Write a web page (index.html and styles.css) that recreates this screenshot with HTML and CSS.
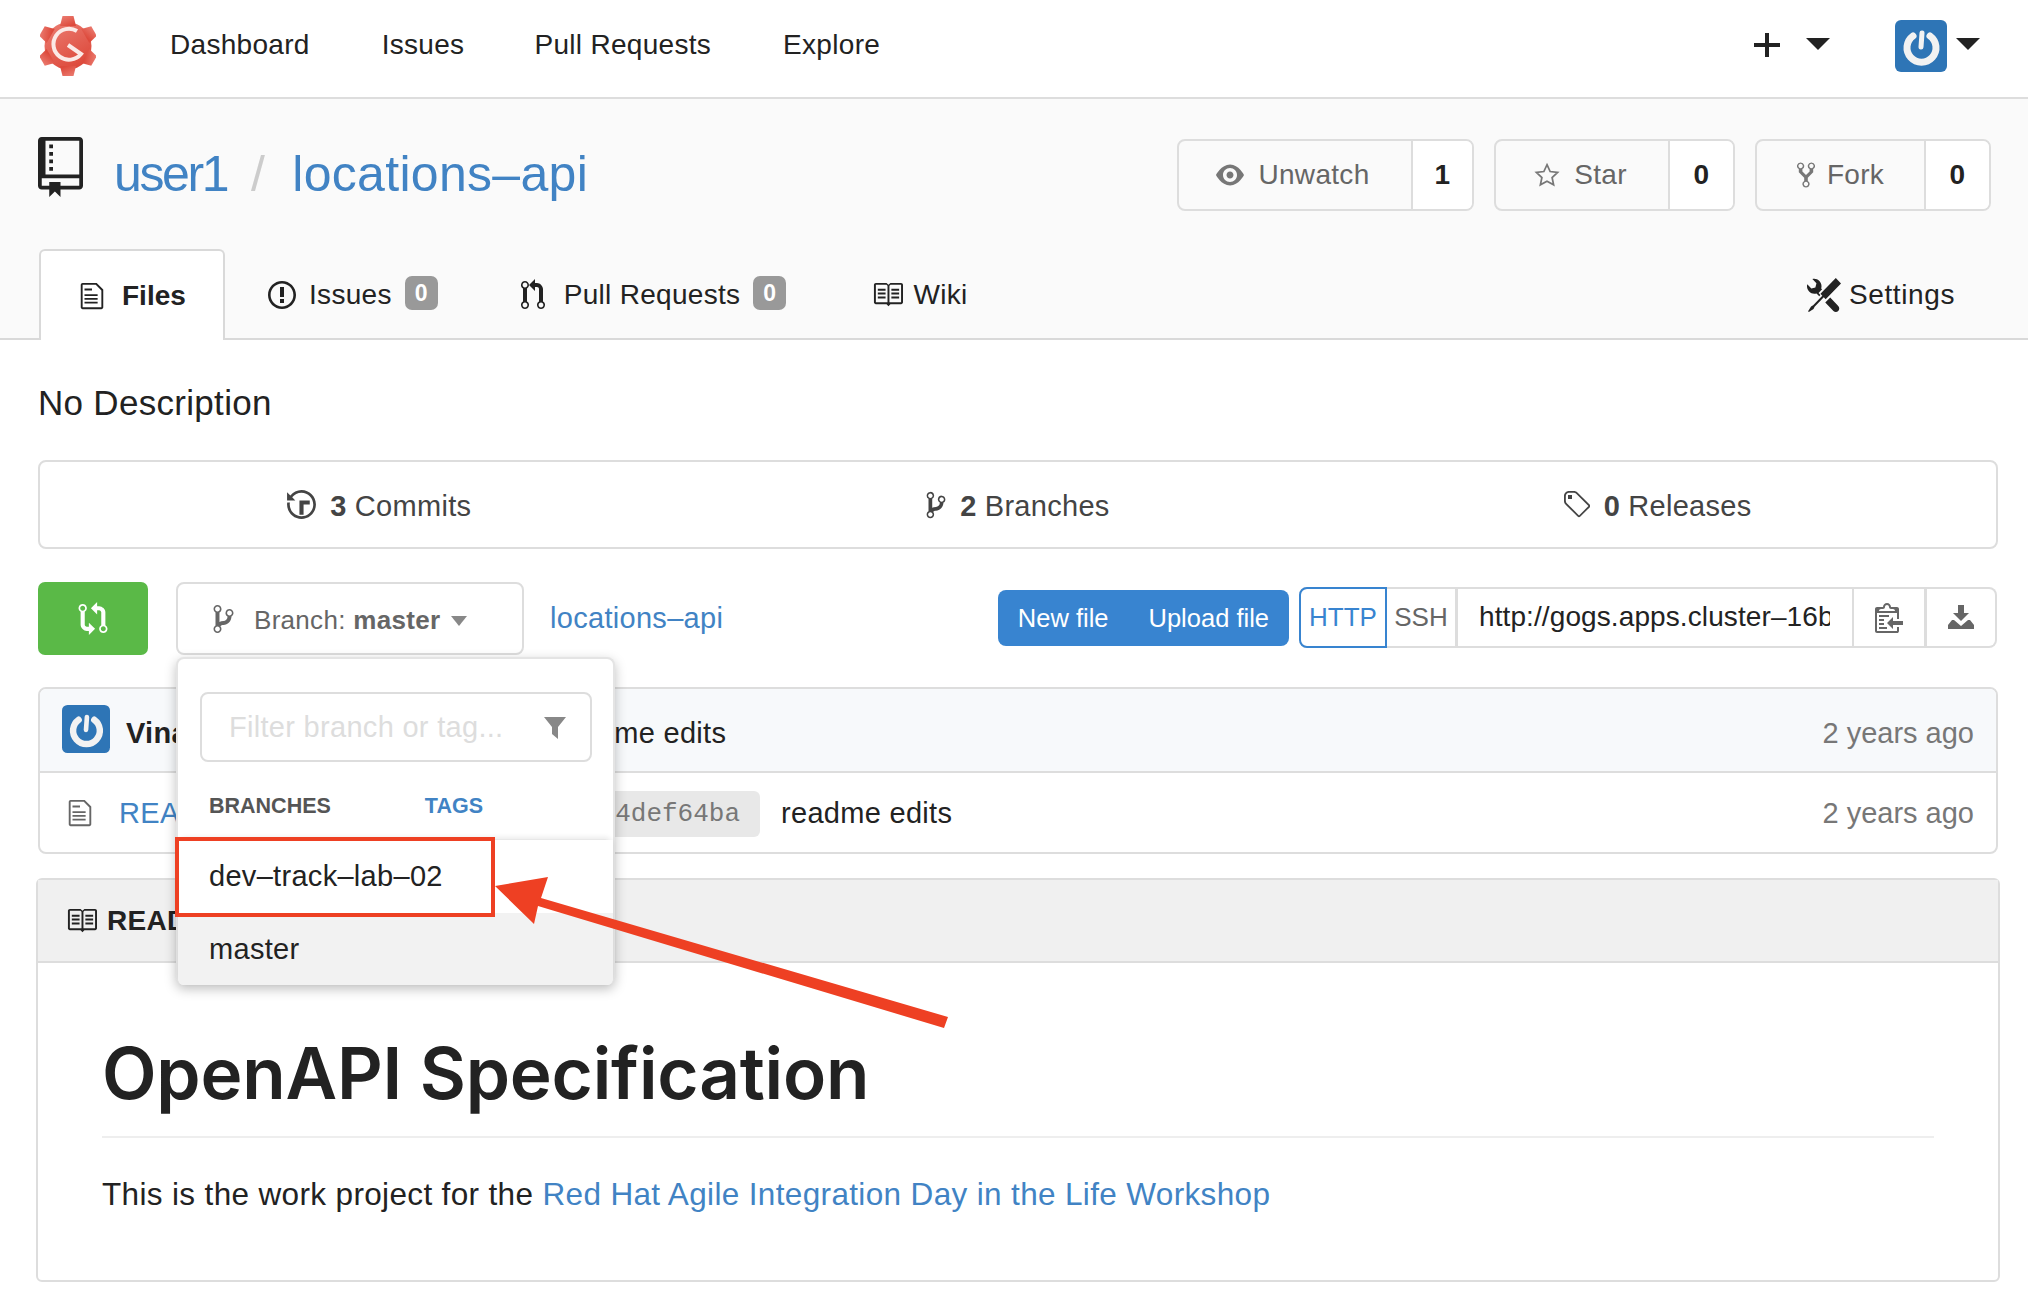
FILE: index.html
```html
<!DOCTYPE html>
<html lang="en">
<head>
	<meta charset="UTF-8">
	<title>user1/locations-api</title>
	<link rel="stylesheet" href="styles.css">
</head>
<body>
<svg class="sprite" width="0" height="0">
	<defs>
		<linearGradient id="gearFill" x1="0" y1="0" x2="0.6" y2="1">
			<stop offset="0" stop-color="#ec7f74"/>
			<stop offset="1" stop-color="#dd4a3c"/>
		</linearGradient>
		<symbol id="i-avatar" viewBox="0 0 52 52">
			<rect width="52" height="52" rx="6" fill="#2e75b6"/>
			<path d="M18 16A14.500 14.500 0 1 0 35 16" fill="none" stroke="#f2f2f2" stroke-width="7" stroke-linecap="round"/>
			<path d="M27 13L26 27" fill="none" stroke="#f2f2f2" stroke-width="5" stroke-linecap="round"/>
		</symbol>
		<symbol id="i-branch" viewBox="0 0 10 16"><path d="M10 5c0-1.110-.89-2-2-2a1.993 1.993 0 0 0-1 3.720v.3c-.02.52-.23.98-.63 1.380-.4.4-.86.61-1.380.63-.83.02-1.480.16-2 .45V4.720a1.993 1.993 0 0 0-1-3.720C.88 1 0 1.890 0 3a2 2 0 0 0 1 1.720v6.560c-.59.35-1 .99-1 1.720 0 1.110.89 2 2 2 1.110 0 2-.89 2-2 0-.53-.2-1-.53-1.360.09-.06.48-.41.59-.47.25-.11.56-.17.94-.17 1.050-.05 1.950-.45 2.750-1.250S8.950 7.770 9 6.730h-.02C9.590 6.370 10 5.730 10 5zM2 1.800c.66 0 1.200.55 1.200 1.200 0 .65-.55 1.200-1.200 1.200C1.350 4.200.8 3.650.8 3c0-.65.55-1.200 1.200-1.200zm0 12.410c-.66 0-1.200-.55-1.200-1.200 0-.65.55-1.200 1.200-1.200.65 0 1.200.55 1.200 1.200 0 .65-.55 1.200-1.200 1.200zm6-8c-.66 0-1.200-.55-1.200-1.200 0-.65.55-1.200 1.200-1.200.65 0 1.200.55 1.200 1.200 0 .65-.55 1.200-1.200 1.200z"/></symbol>
		<symbol id="i-file" viewBox="0 0 12 16"><path d="M6 5H2V4h4v1zM2 8h7V7H2v1zm0 2h7V9H2v1zm0 2h7v-1H2v1zm10-7.500V14c0 .55-.45 1-1 1H1c-.55 0-1-.45-1-1V2c0-.55.45-1 1-1h7.500L12 4.500zM11 5L8 2H1v12h10V5z"/></symbol>
		<symbol id="i-book" viewBox="0 0 16 16"><path d="M3 5h4v1H3V5zm0 3h4V7H3v1zm0 2h4V9H3v1zm11-5h-4v1h4V5zm0 2h-4v1h4V7zm0 2h-4v1h4V9zm2-6v9c0 .55-.45 1-1 1H9.500l-1 1-1-1H2c-.55 0-1-.45-1-1V3c0-.55.45-1 1-1h5.500l1 1 1-1H15c.55 0 1 .45 1 1zm-8 .5L7.500 3H2v9h6V3.500zm7-.5H9.500l-.5.5V12h6V3z"/></symbol>
	</defs>
</svg>

<header class="navbar">
	<svg class="logo" viewBox="0 0 56 60">
		<g transform="translate(28 30)" fill="url(#gearFill)">
			<circle r="23.500"/>
			<path d="M-8 -20L-5.500 -30H5.500L8 -20Z"/>
			<path d="M-8 -20L-5.500 -30H5.500L8 -20Z" transform="rotate(60)"/>
			<path d="M-8 -20L-5.500 -30H5.500L8 -20Z" transform="rotate(120)"/>
			<path d="M-8 -20L-5.500 -30H5.500L8 -20Z" transform="rotate(180)"/>
			<path d="M-8 -20L-5.500 -30H5.500L8 -20Z" transform="rotate(240)"/>
			<path d="M-8 -20L-5.500 -30H5.500L8 -20Z" transform="rotate(300)"/>
		</g>
		<path d="M37 15A15.500 15.500 0 1 0 41 38L28 29" fill="none" stroke="#fbe9e6" stroke-width="4"/>
	</svg>
	<nav class="nav-links">
		<a href="#">Dashboard</a>
		<a href="#">Issues</a>
		<a href="#">Pull Requests</a>
		<a href="#">Explore</a>
	</nav>
	<div class="nav-right">
		<svg class="plus" viewBox="0 0 26 24"><path d="M11 0h4v10h11v4H15v10h-4V14H0v-4h11z"/></svg>
		<span class="caret caret-plus"></span>
		<svg class="avatar"><use href="#i-avatar"/></svg>
		<span class="caret caret-user"></span>
	</div>
</header>

<section class="repo-head">
	<div class="repo-row">
		<div class="repo-title">
			<svg class="repo-icon" viewBox="0 0 12 16"><path d="M4 9H3V8h1v1zm0-3H3v1h1V6zm0-2H3v1h1V4zm0-2H3v1h1V2zm8-1v12c0 .55-.45 1-1 1H6v2l-1.500-1.500L3 16v-2H1c-.55 0-1-.45-1-1V1c0-.55.45-1 1-1h10c.55 0 1 .45 1 1zm-1 10H1v2h2v-1h3v1h5v-2zm0-10H2v9h9V1z"/></svg>
			<a class="repo-user" href="#">user1</a>
			<span class="slash">/</span>
			<a href="#">locations–api</a>
		</div>
		<div class="repo-actions">
			<div class="count-btn btn-watch">
				<span class="count-label"><svg class="ic ic-eye" viewBox="0 0 16 16"><path d="M8.060 2C3 2 0 8 0 8s3 6 8.060 6C13 14 16 8 16 8s-3-6-7.940-6zM8 12c-2.200 0-4-1.780-4-4 0-2.200 1.800-4 4-4 2.220 0 4 1.800 4 4 0 2.220-1.780 4-4 4zm2-4c0 1.110-.89 2-2 2-1.110 0-2-.89-2-2 0-1.110.89-2 2-2 1.110 0 2 .89 2 2z"/></svg>Unwatch</span>
				<span class="count-num">1</span>
			</div>
			<div class="count-btn btn-star">
				<span class="count-label"><svg class="ic ic-star" viewBox="0 0 24 24"><path d="M12 2.500l2.900 6.300 6.900.8-5.100 4.700 1.400 6.800-6.100-3.400-6.100 3.400 1.400-6.800-5.100-4.700 6.900-.8z" fill="none" stroke="#777" stroke-width="1.600"/></svg>Star</span>
				<span class="count-num">0</span>
			</div>
			<div class="count-btn btn-fork">
				<span class="count-label"><svg class="ic ic-fork" viewBox="0 0 10 16"><path d="M8 1a1.993 1.993 0 0 0-1 3.720V6L5 8 3 6V4.720A1.993 1.993 0 0 0 2 1a1.993 1.993 0 0 0-1 3.720V6.500l3 3v1.780A1.993 1.993 0 0 0 5 15a1.993 1.993 0 0 0 1-3.720V9.500l3-3V4.720A1.993 1.993 0 0 0 8 1zM2 4.200C1.340 4.200.8 3.650.8 3c0-.65.55-1.200 1.200-1.200.65 0 1.200.55 1.200 1.200 0 .65-.55 1.200-1.200 1.200zm3 10c-.66 0-1.200-.55-1.200-1.200 0-.65.55-1.200 1.200-1.200.65 0 1.200.55 1.200 1.200 0 .65-.55 1.200-1.200 1.200zm3-10c-.66 0-1.200-.55-1.200-1.200 0-.65.55-1.200 1.200-1.200.65 0 1.200.55 1.200 1.200 0 .65-.55 1.200-1.200 1.200z"/></svg>Fork</span>
				<span class="count-num">0</span>
			</div>
		</div>
	</div>
	<div class="tabs">
		<a class="tab tab-active" href="#"><svg class="tab-ic ic-file"><use href="#i-file"/></svg>Files</a>
		<a class="tab" href="#"><svg class="tab-ic ic-issue" viewBox="0 0 14 16"><path d="M7 2.300c3.140 0 5.700 2.560 5.700 5.700s-2.560 5.700-5.700 5.700A5.710 5.710 0 0 1 1.300 8c0-3.140 2.560-5.700 5.700-5.700zM7 1C3.140 1 0 4.140 0 8s3.140 7 7 7 7-3.140 7-7-3.140-7-7-7zm1 3H6v5h2V4zm0 6H6v2h2v-2z"/></svg>Issues<span class="badge">0</span></a>
		<a class="tab" href="#"><svg class="tab-ic ic-pull" viewBox="0 0 12 16"><path d="M11 11.280V5c-.03-.78-.34-1.470-.94-2.060C9.460 2.350 8.780 2.030 8 2H7V0L4 3l3 3V4h1c.27.02.48.11.69.31.21.2.3.42.31.69v6.280A1.993 1.993 0 0 0 10 15a1.993 1.993 0 0 0 1-3.720zm-1 2.920c-.66 0-1.200-.55-1.200-1.200 0-.65.55-1.200 1.200-1.200.65 0 1.200.55 1.200 1.200 0 .65-.55 1.200-1.200 1.200zM4 3c0-1.110-.89-2-2-2a1.993 1.993 0 0 0-1 3.720v6.560A1.993 1.993 0 0 0 2 15a1.993 1.993 0 0 0 1-3.720V4.720c.59-.34 1-.98 1-1.720zm-.8 10c0 .66-.55 1.200-1.200 1.200-.65 0-1.200-.55-1.200-1.200 0-.65.55-1.200 1.200-1.200.65 0 1.200.55 1.200 1.200zM2 4.200C1.340 4.200.8 3.650.8 3c0-.65.55-1.200 1.200-1.200.65 0 1.200.55 1.200 1.200 0 .65-.55 1.200-1.200 1.200z"/></svg>Pull Requests<span class="badge">0</span></a>
		<a class="tab tab-wiki" href="#"><svg class="tab-ic ic-wiki"><use href="#i-book"/></svg>Wiki</a>
		<a class="tab tab-settings" href="#"><svg class="tab-ic ic-tools" viewBox="0 0 16 16"><path d="M4.480 7.270c.26.26 1.280 1.330 1.280 1.330l.56-.58-.88-.91 1.690-1.800s-.76-.74-.43-.45c.32-1.190.03-2.510-.87-3.440C4.930.5 3.660.2 2.520.51l1.930 2-.51 1.960-1.890.52-1.930-2C-.19 4.170.1 5.480 1 6.400c.94.98 2.290 1.260 3.480.87zm6.440 1.940l-2.330 2.300 3.840 3.980c.31.33.73.49 1.140.49.41 0 .82-.16 1.140-.49.63-.65.63-1.700 0-2.350l-3.790-3.930zM16 2.530L13.550 0 6.330 7.460l.88.91-4.310 4.460-.99.53-1.390 2.270.35.37 2.200-1.440.51-1.020L7.900 9.080l.88.91L16 2.530z"/></svg>Settings</a>
	</div>
</section>

<main class="main">
	<p class="desc">No Description</p>

	<div class="stats">
		<a class="stat" href="#"><svg class="stat-ic ic-history" viewBox="0 0 14 16"><path d="M8 13H6V6h5v2H8v5zM7 1C4.810 1 2.870 2.020 1.590 3.590L0 2v4h4L2.500 4.500C3.550 3.170 5.170 2.300 7 2.300c3.140 0 5.700 2.560 5.700 5.700s-2.560 5.700-5.700 5.700A5.710 5.710 0 0 1 1.300 8c0-.34.03-.67.09-1H.08C.03 7.330 0 7.660 0 8c0 3.860 3.140 7 7 7s7-3.140 7-7-3.140-7-7-7z"/></svg><b>3</b> Commits</a>
		<a class="stat" href="#"><svg class="stat-ic ic-sbranch"><use href="#i-branch"/></svg><b>2</b> Branches</a>
		<a class="stat" href="#"><svg class="stat-ic ic-tag" viewBox="0 0 14 16"><path d="M7.730 1.730C7.260 1.260 6.620 1 5.960 1H3.500C2.130 1 1 2.130 1 3.500v2.470c0 .66.27 1.300.73 1.770l6.060 6.060c.39.39 1.020.39 1.410 0l4.590-4.590a.996.996 0 0 0 0-1.410L7.730 1.730zM2.380 7.090c-.31-.3-.47-.7-.47-1.130V3.500c0-.88.72-1.590 1.590-1.590h2.470c.42 0 .83.16 1.130.47l6.140 6.130-4.730 4.730-6.130-6.150zM3 3h2v2H3V3h-.02z"/></svg><b>0</b> Releases</a>
	</div>

	<div class="toolbar">
		<a class="compare" href="#"><svg viewBox="0 0 14 16"><path d="M5 12H4c-.27-.02-.48-.11-.69-.31-.21-.2-.3-.42-.31-.69V4.720A1.993 1.993 0 0 0 2 1a1.993 1.993 0 0 0-1 3.720V11c.03.78.34 1.470.94 2.060.6.59 1.280.91 2.060.94h1v2l3-3-3-3v2zM2 1.800c.66 0 1.200.55 1.200 1.200 0 .65-.55 1.200-1.200 1.200C1.350 4.200.8 3.650.8 3c0-.65.55-1.200 1.200-1.200zm11 9.480V5c-.03-.78-.34-1.470-.94-2.060-.6-.59-1.280-.91-2.060-.94H9V0L6 3l3 3V4h1c.27.02.48.11.69.31.21.2.3.42.31.69v6.280A1.993 1.993 0 0 0 12 15a1.993 1.993 0 0 0 1-3.720zm-1 2.920c-.66 0-1.200-.55-1.200-1.200 0-.65.55-1.200 1.200-1.200.65 0 1.200.55 1.200 1.200 0 .65-.55 1.200-1.200 1.200z"/></svg></a>

		<div class="branch-wrap">
			<button class="branch-btn" type="button"><svg class="ic-bbranch"><use href="#i-branch"/></svg>Branch:&nbsp;<b>master</b><span class="caret-small"></span></button>
			<div class="dropdown">
				<div class="filter">
					<input class="filter-input" type="text" placeholder="Filter branch or tag...">
					<svg class="filter-ic" viewBox="0 0 22 22"><path d="M0 0h22L14 10v12l-6-5V10z"/></svg>
				</div>
				<div class="ref-tabs">
					<span class="ref-tab">BRANCHES</span>
					<a class="ref-tab ref-link" href="#">TAGS</a>
				</div>
				<ul class="ref-list">
					<li class="ref-item ref-current">dev–track–lab–02</li>
					<li class="ref-item">master</li>
				</ul>
			</div>
		</div>

		<a class="crumb" href="#">locations–api</a>

		<div class="toolbar-right">
			<div class="file-btns">
				<a href="#">New file</a>
				<a href="#">Upload file</a>
			</div>
			<div class="clone">
				<span class="clone-http">HTTP</span>
				<span class="clone-ssh">SSH</span>
				<input class="clone-url" type="text" readonly value="http://gogs.apps.cluster–16b4.example.opentlc.com/user1/locations-api.git">
				<span class="clone-btn"><svg class="ic-clip" viewBox="0 0 14 16"><path d="M2 13h4v1H2v-1zm5-6H2v1h5V7zm2 3V8l-3 3 3 3v-2h5v-2H9zM4.500 9H2v1h2.500V9zM2 12h2.500v-1H2v1zm9 1h1v2c-.02.28-.11.52-.3.7-.19.18-.42.28-.7.3H1c-.55 0-1-.45-1-1V4c0-.55.45-1 1-1h3c0-1.110.89-2 2-2 1.110 0 2 .89 2 2h3c.55 0 1 .45 1 1v5h-1V6H1v9h10v-2zM2 5h8c0-.55-.45-1-1-1H8c-.55 0-1-.45-1-1s-.45-1-1-1-1 .45-1 1-.45 1-1 1H3c-.55 0-1 .45-1 1z"/></svg></span>
				<span class="clone-btn"><svg class="ic-down" viewBox="0 0 26 24"><path d="M10 0h6v8h5l-8 8-8-8h5zM0 20l4-5h2l7 6 7-6h2l4 5v4H0z"/></svg></span>
			</div>
		</div>
	</div>

	<div class="commits">
		<div class="commit-head">
			<svg class="commit-avatar"><use href="#i-avatar"/></svg>
			<span class="commit-user">Vinay</span>
			<span class="commit-msg">readme edits</span>
			<span class="age">2 years ago</span>
		</div>
		<div class="commit-row">
			<svg class="ic-rowfile"><use href="#i-file"/></svg>
			<a class="row-name" href="#">README.md</a>
			<span class="hash">4def64ba</span>
			<span class="row-msg">readme edits</span>
			<span class="age">2 years ago</span>
		</div>
	</div>

	<article class="readme">
		<div class="readme-head"><svg class="ic-readme"><use href="#i-book"/></svg>README.md</div>
		<div class="readme-body">
			<h1>OpenAPI Specification</h1>
			<p>This is the work project for the <a href="#">Red Hat Agile Integration Day in the Life Workshop</a></p>
		</div>
	</article>
</main>

<!-- red annotation drawn over the screenshot -->
<svg class="annot" viewBox="0 0 2028 1310">
	<rect x="177" y="839" width="316" height="76" fill="none" stroke="#ee4023" stroke-width="4"/>
	<path d="M495 886L548 877L541 898L948 1017L944 1028L538 906L534 924Z" fill="#ee4023"/>
</svg>
</body>
</html>
```

FILE: styles.css
```css
body {
	margin: 0;
	font-family: "Liberation Sans", Arial, sans-serif;
	font-size: 28px;
	letter-spacing: 0.3px;
	color: #222;
	background: #fff;
	position: relative;
}
a {
	color: inherit;
	text-decoration: none;
}
svg {
	fill: currentColor;
	flex: none;
}
.sprite {
	position: absolute;
}

/* top bar */
.navbar {
	display: flex;
	align-items: center;
	height: 97px;
	padding: 0 48px 0 40px;
	border-bottom: 2px solid #ddd;
}
.logo {
	width: 56px;
	height: 60px;
	margin-top: -6px;
}
.nav-links {
	display: flex;
	margin-left: 38px;
	margin-top: -8px;
}
.nav-links a {
	padding: 0 36px;
}
.nav-links a:nth-child(2) {
	padding-right: 34px;
}
.nav-right {
	display: flex;
	align-items: center;
	margin-left: auto;
	margin-top: -8px;
}
.plus {
	width: 26px;
	height: 24px;
}
.caret {
	width: 0;
	height: 0;
	border-left: 12px solid transparent;
	border-right: 12px solid transparent;
	border-top: 12px solid #222;
	margin-top: -2px;
}
.caret-plus {
	margin-left: 26px;
}
.avatar {
	width: 52px;
	height: 52px;
	margin-left: 65px;
	margin-top: 2px;
}
.caret-user {
	margin-left: 9px;
}

/* repo header */
.repo-head {
	background: #fafafa;
	height: 239px;
	border-bottom: 2px solid #d9d9d9;
}
.repo-row {
	display: flex;
	justify-content: space-between;
	padding: 38px 37px 0 38px;
	height: 74px;
}
.repo-title {
	display: flex;
	align-items: center;
	font-size: 50px;
	color: #4183c4;
	height: 74px;
}
.repo-user {
	letter-spacing: -2.400px;
}
.repo-icon {
	width: 45px;
	height: 60px;
	color: #222;
	margin-right: 31px;
	margin-top: -14px;
}
.slash {
	color: #ccc;
	margin: 0 27px 0 24px;
}
.repo-actions {
	display: flex;
	gap: 20px;
	padding-top: 2px;
}
.count-btn {
	display: flex;
	height: 72px;
	box-sizing: border-box;
	border: 2px solid #ddd;
	border-radius: 8px;
	color: #666;
}
.count-label {
	display: flex;
	align-items: center;
	justify-content: center;
	border-right: 2px solid #ddd;
}
.count-num {
	display: flex;
	align-items: center;
	justify-content: center;
	background: #fff;
	color: #222;
	font-weight: bold;
	border-radius: 0 6px 6px 0;
}
.btn-watch .count-label { width: 228px; padding-right: 4px; }
.btn-watch .count-num { width: 59px; }
.btn-star .count-label { width: 169px; padding-right: 3px; }
.btn-star .count-num { width: 63px; }
.btn-fork .count-label { width: 167px; }
.btn-fork .count-num { width: 63px; }
.ic {
	color: #777;
}
.ic-eye {
	width: 28px;
	height: 28px;
	margin-right: 14px;
}
.ic-star {
	width: 26px;
	height: 26px;
	margin-right: 14px;
}
.ic-fork {
	width: 18px;
	height: 30px;
	margin-right: 12px;
}

/* tabs */
.tabs {
	display: flex;
	margin-top: 38px;
	padding: 0 38px 0 39px;
	height: 91px;
}
.tab {
	display: flex;
	align-items: center;
	padding: 0 41px;
	box-sizing: border-box;
	height: 91px;
}
.tab-active {
	padding: 0 39px;
	width: 186px;
	background: #fff;
	border: 2px solid #d9d9d9;
	border-bottom: 0;
	border-radius: 6px 6px 0 0;
	font-weight: bold;
	letter-spacing: 0;
}
.tab-active + .tab {
	padding-left: 43px;
}
.tab-wiki {
	padding-left: 45px;
}
.tab-settings {
	margin-left: auto;
	padding-right: 35px;
	letter-spacing: 0.6px;
}
.ic-file {
	width: 24px;
	height: 30px;
	margin-right: 18px;
}
.ic-issue {
	width: 28px;
	height: 32px;
	margin-right: 13px;
}
.ic-pull {
	width: 26px;
	height: 32px;
	margin-right: 18px;
}
.ic-wiki {
	width: 31px;
	height: 31px;
	margin-right: 10px;
}
.ic-tools {
	width: 34px;
	height: 34px;
	margin-right: 8px;
}
.badge {
	display: inline-block;
	width: 33px;
	height: 34px;
	line-height: 34px;
	margin: -4px 0 0 13px;
	background: #999;
	color: #fff;
	font-size: 23px;
	font-weight: bold;
	text-align: center;
	border-radius: 7px;
}

/* main */
.main {
	padding: 0 30px 0 38px;
}
.desc {
	margin: 43px 0 37px;
	font-size: 35px;
	line-height: 40px;
}
.stats {
	display: grid;
	grid-template-columns: repeat(3, 1fr);
	height: 89px;
	box-sizing: border-box;
	padding: 4px 20px 0;
	border: 2px solid #ddd;
	border-radius: 8px;
	font-size: 29px;
}
.stat {
	display: flex;
	align-items: center;
	justify-content: center;
	color: #444;
}
.stat b {
	margin-right: 8px;
}
.stat-ic {
	margin-right: 14px;
	margin-top: -4px;
}
.ic-history {
	width: 29px;
	height: 33px;
}
.ic-sbranch {
	width: 20px;
	height: 30px;
}
.ic-tag {
	width: 28px;
	height: 32px;
}

.toolbar {
	display: flex;
	align-items: center;
	margin-top: 33px;
	height: 73px;
}
.compare {
	display: flex;
	align-items: center;
	justify-content: center;
	width: 110px;
	height: 73px;
	background: #5ab947;
	color: #fff;
	border-radius: 7px;
}
.compare svg {
	width: 30px;
	height: 33px;
}
.branch-wrap {
	position: relative;
	margin-left: 28px;
}
.branch-btn {
	display: flex;
	align-items: center;
	width: 348px;
	height: 73px;
	box-sizing: border-box;
	padding: 4px 0 0 35px;
	background: #fff;
	border: 2px solid #ddd;
	border-radius: 8px;
	color: #666;
	font: inherit;
	font-size: 26px;
	letter-spacing: 0.3px;
}
.ic-bbranch {
	width: 21px;
	height: 32px;
	margin-right: 20px;
	margin-top: -4px;
}
.caret-small {
	width: 0;
	height: 0;
	margin-left: 11px;
	border-left: 8px solid transparent;
	border-right: 8px solid transparent;
	border-top: 10px solid #888;
}

/* branch menu */
.dropdown {
	position: absolute;
	top: 75px;
	left: 0;
	z-index: 5;
	width: 439px;
	box-sizing: border-box;
	border: 2px solid #e4e4e4;
	border-bottom: 0;
	border-radius: 8px;
	background: #fff;
	box-shadow: 0 4px 12px rgba(0, 0, 0, 0.25);
}
.filter {
	position: relative;
	margin: 33px 21px 0 22px;
}
.filter-input {
	display: block;
	width: 100%;
	height: 70px;
	box-sizing: border-box;
	padding: 0 70px 0 27px;
	border: 2px solid #ddd;
	border-radius: 8px;
	font: inherit;
	font-size: 29px;
	letter-spacing: 0.3px;
	outline: none;
}
.filter-input::placeholder {
	color: #ddd;
}
.filter-ic {
	position: absolute;
	top: 25px;
	right: 26px;
	width: 22px;
	height: 22px;
	color: #888;
}
.ref-tabs {
	display: flex;
	align-items: center;
	height: 65px;
	padding: 12px 0 0 31px;
	font-size: 21.500px;
	font-weight: bold;
	letter-spacing: 0;
	color: #555;
}
.ref-link {
	color: #4183c4;
	margin-left: 94px;
}
.ref-list {
	margin: 0;
	padding: 0;
	list-style: none;
	border-top: 1px solid #e8e8e8;
	border-radius: 8px;
	box-shadow: 0 -2px 5px rgba(0, 0, 0, 0.08);
	font-size: 29px;
}
.ref-item {
	height: 72px;
	line-height: 72px;
	padding-left: 31px;
	background: #f2f2f2;
}
.ref-current {
	height: 73px;
	line-height: 73px;
	background: #fff;
}
.ref-item:last-child {
	border-radius: 0 0 6px 6px;
}

.crumb {
	margin-left: 26px;
	color: #4183c4;
	font-size: 29px;
}
.toolbar-right {
	display: flex;
	align-items: center;
	margin-left: auto;
	margin-right: 1px;
	margin-top: -3px;
}
.file-btns {
	display: flex;
	align-items: center;
	height: 56px;
	padding: 0 20px;
	gap: 40px;
	margin-right: 10px;
	margin-top: 2px;
	background: #3884d0;
	color: #fff;
	border-radius: 8px;
	font-size: 25.500px;
	letter-spacing: 0;
}
.clone {
	display: flex;
	height: 61px;
	box-sizing: border-box;
	border: 2px solid #ddd;
	border-left: 0;
	border-radius: 8px;
	background: #fff;
	font-size: 26px;
	letter-spacing: 0;
}
.clone span {
	display: flex;
	align-items: center;
	justify-content: center;
}
.clone-http {
	width: 88px;
	height: 61px;
	margin-top: -2px;
	box-sizing: border-box;
	border: 2px solid #3884d0;
	border-radius: 8px 0 0 8px;
	color: #3884d0;
}
.clone-ssh {
	width: 68px;
	color: #666;
	border-right: 3px solid #ddd;
}
.clone-url {
	width: 396px;
	box-sizing: border-box;
	padding: 0 22px 0 21px;
	border: 0;
	background: #fff;
	font: inherit;
	font-size: 28px;
	letter-spacing: 0.1px;
	color: #222;
	outline: none;
	border-right: 2px solid #ddd;
}
.clone-btn {
	width: 70px;
	color: #666;
}
.clone-btn + .clone-btn {
	width: 68px;
	border-left: 3px solid #ddd;
}
.ic-clip {
	width: 30px;
	height: 32px;
}
.ic-down {
	width: 26px;
	height: 24px;
}

/* latest commit and files */
.commits {
	margin-top: 32px;
	height: 167px;
	box-sizing: border-box;
	border: 2px solid #ddd;
	border-radius: 8px;
	font-size: 29px;
}
.commit-head,
.commit-row {
	position: relative;
	display: flex;
	align-items: center;
}
.commit-head {
	height: 76px;
	padding-top: 6px;
	background: #f7f9fb;
	border-bottom: 2px solid #ddd;
	border-radius: 6px 6px 0 0;
}
.commit-row {
	height: 77px;
	padding-top: 2px;
}
.commit-avatar {
	width: 48px;
	height: 48px;
	margin: -8px 0 0 22px;
}
.commit-user {
	width: 429px;
	margin-left: 16px;
	font-weight: bold;
}
.age {
	margin-left: auto;
	margin-right: 22px;
	color: #777;
	letter-spacing: 0;
}
.ic-rowfile {
	width: 24px;
	height: 30px;
	margin: -2px 0 0 28px;
	color: #666;
}
.row-name {
	width: 421px;
	margin-left: 27px;
	color: #4183c4;
}
.hash {
	width: 220px;
	height: 46px;
	line-height: 46px;
	padding-right: 20px;
	box-sizing: border-box;
	text-align: right;
	background: #e8e8e8;
	color: #777;
	border-radius: 6px;
	font-family: "Liberation Mono", monospace;
	font-size: 26px;
	letter-spacing: 0;
}
.row-msg {
	margin-left: 21px;
}

/* readme */
.readme {
	margin: 24px -2px 0;
	height: 404px;
	box-sizing: border-box;
	border: 2px solid #ddd;
	border-radius: 6px;
}
.readme-head {
	display: flex;
	align-items: center;
	height: 81px;
	padding-left: 28px;
	background: #f0f0f0;
	border-bottom: 2px solid #ddd;
	font-weight: bold;
}
.ic-readme {
	width: 31px;
	height: 31px;
	margin-right: 10px;
}
.readme-body {
	padding: 0 64px;
}
.readme-body h1 {
	margin: 0;
	padding: 70px 0 23px;
	font-family: Inter, "Liberation Sans", sans-serif;
	font-size: 71px;
	font-weight: 600;
	line-height: 80px;
	letter-spacing: -0.2px;
	border-bottom: 2px solid #eee;
}
.readme-body p {
	margin: 36px 0 0;
	font-size: 31.500px;
	letter-spacing: 0.35px;
	line-height: 40px;
}
.readme-body a {
	color: #4183c4;
}

.annot {
	position: absolute;
	top: 0;
	left: 0;
	width: 2028px;
	height: 1310px;
	z-index: 10;
	pointer-events: none;
}
```
